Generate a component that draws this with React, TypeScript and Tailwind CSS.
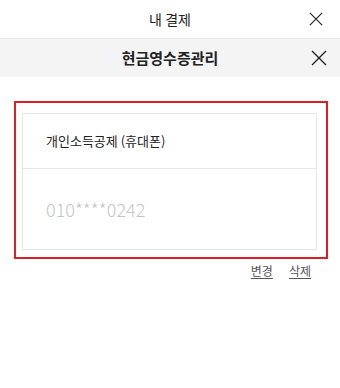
const font = { fontFamily: '"Noto Sans CJK KR", "Noto Sans", sans-serif' }

function CloseIcon({ size }: { size: number }) {
  return (
    <svg width={size} height={size} viewBox="0 0 16 16" fill="none" stroke="#222" strokeWidth="1.4">
      <path d="M1 1L15 15M15 1L1 15" />
    </svg>
  )
}

export default function App() {
  return (
    <div className="w-[340px] h-[388px] bg-white text-[#222]" style={font}>
      {/* top bar */}
      <div className="h-[39px] flex items-center border-b border-[#ececec]">
        <div className="w-[60px]" />
        <div className="flex-1 text-center text-[14px]">내 결제</div>
        <div className="w-[60px] flex justify-end pr-[17px]">
          <CloseIcon size={14} />
        </div>
      </div>

      {/* section header */}
      <div className="h-[38px] flex items-center bg-[#f4f4f4]">
        <div className="w-[60px]" />
        <div className="flex-1 text-center text-[15px] font-bold">현금영수증관리</div>
        <div className="w-[60px] flex justify-end pr-[13px]">
          <CloseIcon size={16} />
        </div>
      </div>

      <div className="pt-[24px] pl-[14px] pr-[12px]">
        <div className="border-2 border-[#dc1f26] pl-[6px] pr-[9px] pt-[10px] pb-[7px]">
          <div className="border border-[#e6e6e6]">
            <div className="h-[55px] flex items-center pl-[23px] text-[13px] border-b border-[#e6e6e6]">
              개인소득공제 (휴대폰)
            </div>
            <div className="h-[80px] flex items-center pl-[23px] text-[18px] font-light text-[#c4c4c4]">
              010****0242
            </div>
          </div>
        </div>

        <div className="flex justify-end gap-[16px] pr-[17px] pt-[3px] text-[12px] text-[#555]">
          <span className="underline underline-offset-2">변경</span>
          <span className="underline underline-offset-2">삭제</span>
        </div>
      </div>
    </div>
  )
}
